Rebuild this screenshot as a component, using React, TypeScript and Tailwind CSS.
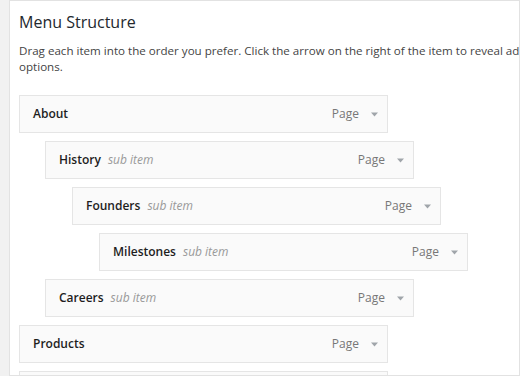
const items = [
  { title: 'About', depth: 0 },
  { title: 'History', depth: 1 },
  { title: 'Founders', depth: 2 },
  { title: 'Milestones', depth: 3 },
  { title: 'Careers', depth: 1 },
  { title: 'Products', depth: 0 },
  { title: 'Services', depth: 0 },
];

const indent = ['ml-0', 'ml-[26px]', 'ml-[53px]', 'ml-[80px]'];

function MenuItem({ title, depth }: { title: string; depth: number }) {
  return (
    <div
      className={`${indent[depth]} flex h-[38px] w-[369px] shrink-0 items-center border border-[#e5e5e5] bg-[#fafafa] pl-[13px] pr-[9px]`}
    >
      <span className="text-[12px] font-semibold text-[#1e1e1e]">{title}</span>
      {depth > 0 && <span className="ml-[7px] text-[12px] italic text-[#999]">sub item</span>}
      <span className="ml-auto text-[12px] text-[#777]">Page</span>
      <svg className="ml-[12px]" width="7" height="5" viewBox="0 0 7 5">
        <path d="M0 0.5h7L3.5 4.5z" fill="#a0a5aa" />
      </svg>
    </div>
  );
}

export default function App() {
  return (
    <div
      className="h-[376px] w-[520px] overflow-hidden bg-[#f1f1f1] pl-[9px]"
      style={{ fontFamily: '"Open Sans", "Liberation Sans", sans-serif' }}
    >
      <div className="h-[376px] w-[511px] overflow-hidden border border-[#e2e2e2] bg-white pl-[9px]">
        <h3 className="mt-[10px] text-[16px] leading-[22px] text-[#23282d]">Menu Structure</h3>
        <p className="mt-[10px] w-[640px] text-[11.6px] leading-[16px] text-[#444]">
          Drag each item into the order you prefer. Click the arrow on the right of the item to reveal additional
          <br />
          options.
        </p>
        <div className="mt-[20px] flex flex-col gap-[8px]">
          {items.map((item) => (
            <MenuItem key={item.title} title={item.title} depth={item.depth} />
          ))}
        </div>
      </div>
    </div>
  );
}
